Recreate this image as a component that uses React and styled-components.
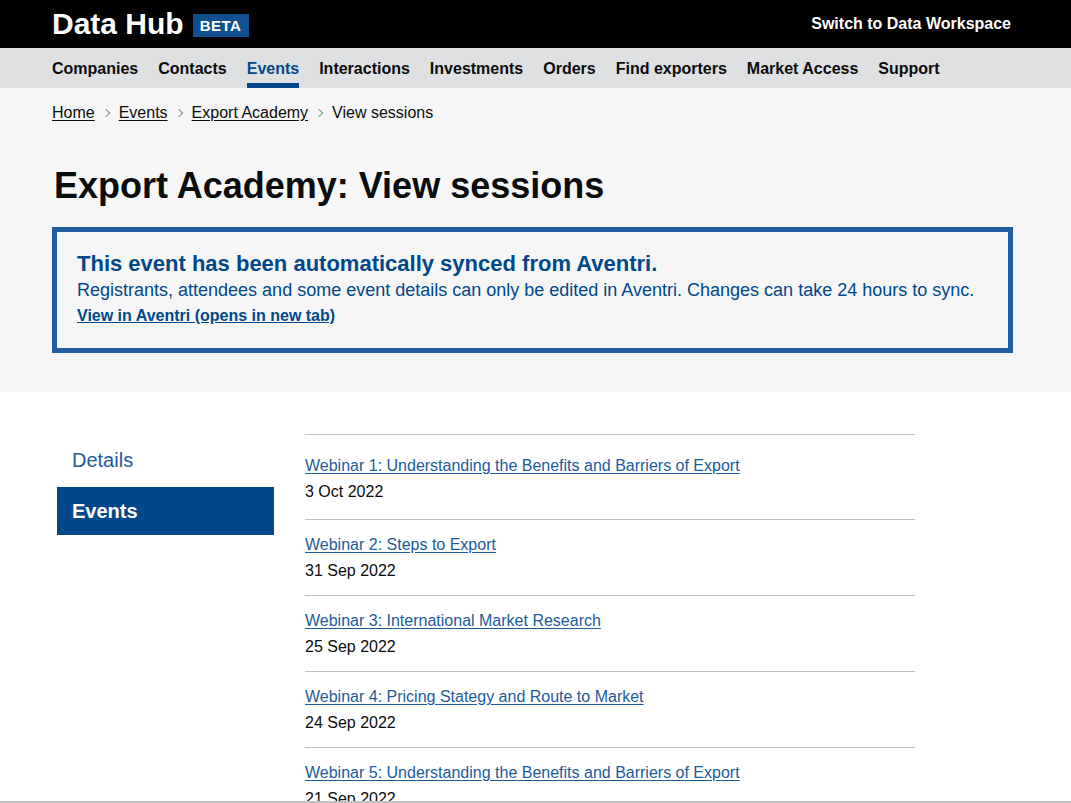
import React from 'react';
import styled, { createGlobalStyle } from 'styled-components';

const GlobalStyle = createGlobalStyle`
    html, body {
        margin: 0;
        padding: 0;
        background: #ffffff;
        font-family: "Liberation Sans", Arial, sans-serif;
        color: #0b0c0c;
    }
    * { box-sizing: border-box; }
`;

const BLUE = '#1d5b9c';
const DARK_BLUE = '#00488a';

const Header = styled.header`
    background: #000000;
    height: 48px;
    display: flex;
    align-items: center;
    justify-content: space-between;
    padding: 0 60px 0 52px;
`;

const Brand = styled.div`
    display: flex;
    align-items: center;
    gap: 9px;
`;

const BrandName = styled.span`
    color: #ffffff;
    font-size: 30px;
    font-weight: 700;
`;

const Badge = styled.span`
    background: #11508f;
    color: #ffffff;
    font-size: 15px;
    font-weight: 700;
    letter-spacing: 0.5px;
    padding: 3px 8px 2px 7px;
    line-height: 18px;
    margin-top: 3px;
`;

const SwitchLink = styled.a`
    color: #ffffff;
    font-size: 16px;
    font-weight: 700;
    text-decoration: none;
`;

const Nav = styled.nav`
    background: #dee0e2;
    height: 40px;
    display: flex;
    gap: 20px;
    padding-left: 52px;
`;

const NavItem = styled.a`
    display: flex;
    align-items: center;
    font-size: 16px;
    font-weight: 700;
    color: ${(p) => (p.$active ? DARK_BLUE : '#0b0c0c')};
    text-decoration: none;
    border-bottom: 5px solid ${(p) => (p.$active ? DARK_BLUE : 'transparent')};
    padding-top: 7px;
`;

const LocalHeader = styled.div`
    background: #f6f6f6;
    padding: 15px 0 39px 52px;
`;

const Breadcrumbs = styled.ol`
    list-style: none;
    margin: 0;
    padding: 0;
    display: flex;
    align-items: center;
    font-size: 16px;
    line-height: 20px;
`;

const Crumb = styled.li`
    display: flex;
    align-items: center;

    a {
        color: #0b0c0c;
        text-decoration: underline;
        text-underline-offset: 2px;
    }
`;

const Chevron = styled.span`
    display: inline-block;
    width: 6px;
    height: 6px;
    border-top: 1px solid #8a8f92;
    border-right: 1px solid #8a8f92;
    transform: rotate(45deg);
    margin: 0 10px 0 8px;
`;

const Title = styled.h1`
    margin: 42px 0 20px 2px;
    font-size: 36px;
    line-height: 42px;
    font-weight: 700;
`;

const InfoBox = styled.div`
    width: 961px;
    border: 5px solid #1f5ea1;
    padding: 19px 20px 19px;
`;

const InfoHeading = styled.h2`
    margin: 0;
    font-size: 22px;
    line-height: 26px;
    font-weight: 700;
    color: ${DARK_BLUE};
`;

const InfoText = styled.p`
    margin: 0;
    font-size: 18px;
    line-height: 26px;
    color: ${DARK_BLUE};
`;

const InfoLink = styled.a`
    display: block;
    font-size: 16px;
    line-height: 26px;
    font-weight: 700;
    color: ${DARK_BLUE};
    text-decoration: underline;
`;

const Main = styled.div`
    display: flex;
    align-items: flex-start;
    padding: 42px 0 0 57px;
`;

const SideNav = styled.ul`
    list-style: none;
    margin: 2px 0 0;
    padding: 0;
    width: 217px;
    display: flex;
    flex-direction: column;
    gap: 3px;
`;

const SideItem = styled.li`
    height: 48px;
    display: flex;
    align-items: center;
    padding-left: 15px;
    font-size: 20px;
    font-weight: ${(p) => (p.$active ? 700 : 400)};
    color: ${(p) => (p.$active ? '#ffffff' : BLUE)};
    background: ${(p) => (p.$active ? DARK_BLUE : 'transparent')};
`;

const SessionList = styled.ul`
    list-style: none;
    margin: 0 0 0 31px;
    padding: 0;
    width: 610px;
    border-top: 1px solid #bfc1c3;
`;

const Session = styled.li`
    padding: 12px 0 11px;
    border-bottom: 1px solid #bfc1c3;

    &:first-child {
        padding-top: 18px;
        padding-bottom: 14px;
    }

    a {
        display: block;
        font-size: 16px;
        line-height: 26px;
        color: ${BLUE};
        text-decoration: underline;
        text-underline-offset: 2px;
    }
`;

const SessionDate = styled.div`
    font-size: 16px;
    line-height: 26px;
    color: #0b0c0c;
`;

const BottomEdge = styled.div`
    position: fixed;
    left: 0;
    right: 0;
    bottom: 0;
    height: 2px;
    background: #bfc1c3;
`;

const navItems = ['Companies', 'Contacts', 'Events', 'Interactions', 'Investments', 'Orders', 'Find exporters', 'Market Access', 'Support'];

const sessions = [
    { title: 'Webinar 1: Understanding the Benefits and Barriers of Export', date: '3 Oct 2022' },
    { title: 'Webinar 2: Steps to Export', date: '31 Sep 2022' },
    { title: 'Webinar 3: International Market Research', date: '25 Sep 2022' },
    { title: 'Webinar 4: Pricing Stategy and Route to Market', date: '24 Sep 2022' },
    { title: 'Webinar 5: Understanding the Benefits and Barriers of Export', date: '21 Sep 2022' },
    { title: 'Webinar 6: Finance and Payment', date: '18 Sep 2022' },
];

const App = () => {
    return (
        <>
            <GlobalStyle />
            <Header>
                <Brand>
                    <BrandName>Data Hub</BrandName>
                    <Badge>BETA</Badge>
                </Brand>
                <SwitchLink href="#">Switch to Data Workspace</SwitchLink>
            </Header>
            <Nav>
                {navItems.map((item) => (
                    <NavItem key={item} href="#" $active={item === 'Events'}>{item}</NavItem>
                ))}
            </Nav>
            <LocalHeader>
                <Breadcrumbs>
                    <Crumb><a href="#">Home</a><Chevron /></Crumb>
                    <Crumb><a href="#">Events</a><Chevron /></Crumb>
                    <Crumb><a href="#">Export Academy</a><Chevron /></Crumb>
                    <Crumb>View sessions</Crumb>
                </Breadcrumbs>
                <Title>Export Academy: View sessions</Title>
                <InfoBox>
                    <InfoHeading>This event has been automatically synced from Aventri.</InfoHeading>
                    <InfoText>Registrants, attendees and some event details can only be edited in Aventri. Changes can take 24 hours to sync.</InfoText>
                    <InfoLink href="#">View in Aventri (opens in new tab)</InfoLink>
                </InfoBox>
            </LocalHeader>
            <Main>
                <SideNav>
                    <SideItem>Details</SideItem>
                    <SideItem $active>Events</SideItem>
                </SideNav>
                <SessionList>
                    {sessions.map((s) => (
                        <Session key={s.title}>
                            <a href="#">{s.title}</a>
                            <SessionDate>{s.date}</SessionDate>
                        </Session>
                    ))}
                </SessionList>
            </Main>
            <BottomEdge />
        </>
    );
};

export default App;
